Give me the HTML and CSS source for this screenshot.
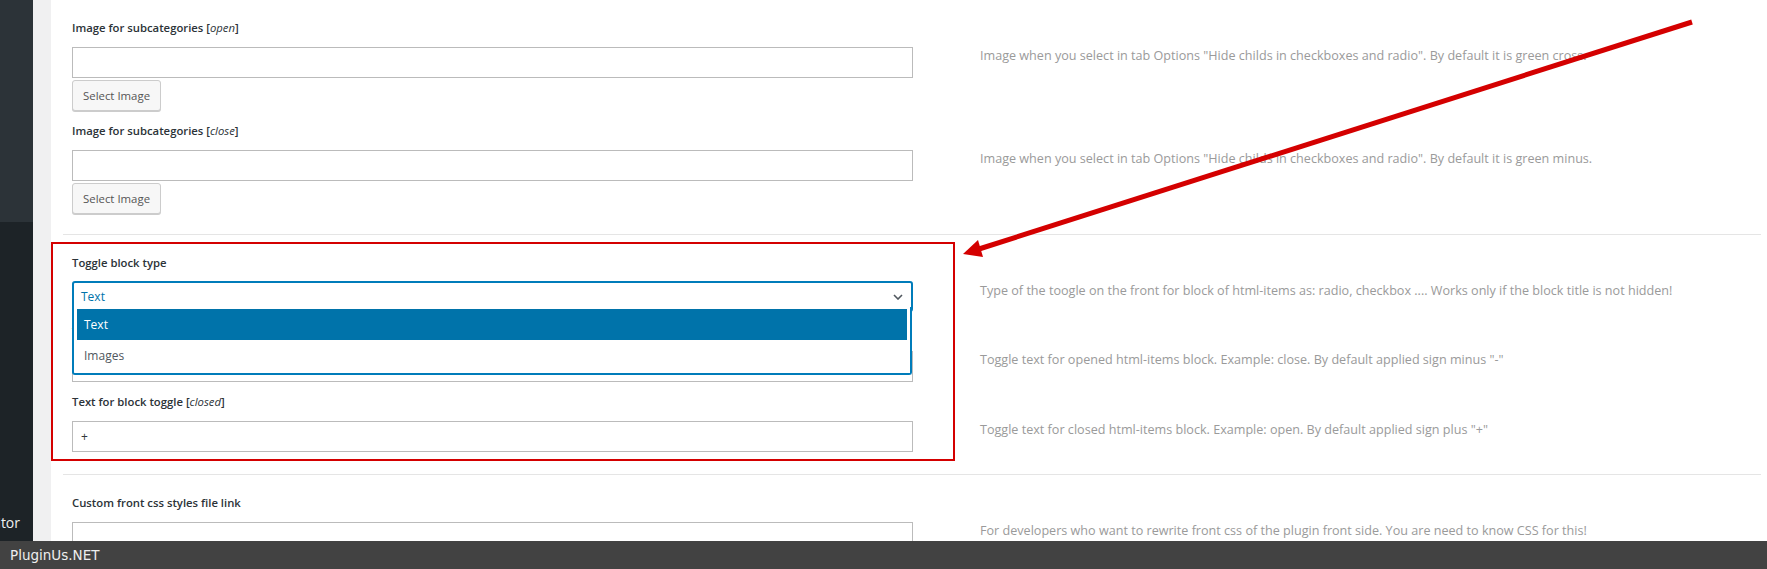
FILE: index.html
```html
<!DOCTYPE html>
<html lang="en">
<head>
    <meta charset="UTF-8">
    <title>Options</title>
    <link rel="stylesheet" href="styles.css">
</head>
<body>
<div id="page">
    <div class="adminmenu">
        <div class="submenu"></div>
        <div class="menu-item">Editor</div>
    </div>
    <div class="wpcontent">
        <div class="main">
            <div class="group">
                <section class="option">
                    <h4>Image for subcategories [<i>open</i>]</h4>
                    <div class="row">
                        <div class="control">
                            <input type="text" class="field">
                            <button class="btn">Select Image</button>
                        </div>
                        <p class="desc">Image when you select in tab Options "Hide childs in checkboxes and radio". By default it is green cross.</p>
                    </div>
                </section>
                <section class="option">
                    <h4>Image for subcategories [<i>close</i>]</h4>
                    <div class="row">
                        <div class="control">
                            <input type="text" class="field">
                            <button class="btn">Select Image</button>
                        </div>
                        <p class="desc">Image when you select in tab Options "Hide childs in checkboxes and radio". By default it is green minus.</p>
                    </div>
                </section>
            </div>
            <div class="group">
                <section class="option">
                    <h4>Toggle block type</h4>
                    <div class="row">
                        <div class="control">
                            <div class="select">
                                <span class="select-value">Text</span>
                                <svg class="chevron" width="10" height="6" viewBox="0 0 10 6"><path d="M1 1l4 4 4-4" fill="none" stroke="#50575e" stroke-width="1.6"/></svg>
                                <ul class="select-menu">
                                    <li class="active">Text</li>
                                    <li>Images</li>
                                </ul>
                            </div>
                        </div>
                        <p class="desc">Type of the toogle on the front for block of html-items as: radio, checkbox .... Works only if the block title is not hidden!</p>
                    </div>
                </section>
                <section class="option">
                    <h4>Text for block toggle [<i>opened</i>]</h4>
                    <div class="row">
                        <div class="control">
                            <input type="text" class="field" value="-">
                        </div>
                        <p class="desc">Toggle text for opened html-items block. Example: close. By default applied sign minus "-"</p>
                    </div>
                </section>
                <section class="option">
                    <h4>Text for block toggle [<i>closed</i>]</h4>
                    <div class="row">
                        <div class="control">
                            <input type="text" class="field" value="+">
                        </div>
                        <p class="desc">Toggle text for closed html-items block. Example: open. By default applied sign plus "+"</p>
                    </div>
                </section>
            </div>
            <div class="group">
                <section class="option">
                    <h4>Custom front css styles file link</h4>
                    <div class="row">
                        <div class="control">
                            <input type="text" class="field">
                        </div>
                        <p class="desc">For developers who want to rewrite front css of the plugin front side. You are need to know CSS for this!</p>
                    </div>
                </section>
            </div>
        </div>
    </div>
</div>

<!-- annotation drawn over the screenshot -->
<svg class="annotation" width="1767" height="569" viewBox="0 0 1767 569">
    <rect x="52" y="243" width="902" height="217" fill="none" stroke="#d40000" stroke-width="2"/>
    <line x1="1692" y1="22" x2="979" y2="249" stroke="#d40000" stroke-width="5"/>
    <polygon points="963,254 983,257 978,240" fill="#d40000"/>
</svg>

<div class="watermark">PluginUs.NET</div>
</body>
</html>
```

FILE: styles.css
```css
*{
    margin: 0;
    padding: 0;
    box-sizing: border-box;
}
html, body{
    height: 100%;
    overflow: hidden;
}
body{
    background-color: #f0f0f1;
    font-family: "Open Sans", "Liberation Sans", sans-serif;
    font-size: 12px;
    color: #23282d;
}
#page{
    display: flex;
    height: 100%;
}
.adminmenu{
    width: 33px;
    flex: none;
    display: flex;
    flex-direction: column;
    background-color: #1d2327;
    overflow: hidden;
}
.adminmenu .submenu{
    height: 222px;
    background-color: #2c3338;
}
.adminmenu .menu-item{
    margin-top: 291px;
    line-height: 20px;
    font-size: 14px;
    color: #f0f0f1;
    white-space: nowrap;
    text-indent: -19px;
}
.wpcontent{
    flex: 1;
    padding-left: 18px;
}
.main{
    height: 100%;
    background-color: #fff;
    padding: 0 6px 0 12px;
}
.group{
    padding: 9px 0;
    border-bottom: 1px solid #e5e5e5;
}
.group + .group{
    padding-bottom: 11px;
}
.option{
    margin: 10px 0 11px;
    padding-left: 9px;
}
.option h4{
    font-size: 11.3px;
    font-weight: 600;
    line-height: 18px;
    margin-bottom: 10px;
    color: #2c3338;
}
.option h4 i{
    font-weight: 400;
}
.row{
    display: flex;
    gap: 67px;
    align-items: flex-start;
}
.control{
    width: 841px;
    flex: none;
}
.field{
    display: block;
    width: 100%;
    height: 31px;
    padding: 0 8px;
    border: 1px solid #bbb;
    background: #fff;
    font-family: inherit;
    font-size: 12px;
    color: #32373c;
    outline: none;
}
.btn{
    display: block;
    margin-top: 2px;
    height: 31px;
    padding: 0 10px;
    border: 1px solid #ccc;
    border-radius: 3px;
    background: #f7f7f7;
    box-shadow: 0 1px 0 #ccc;
    font-family: inherit;
    font-size: 11.4px;
    color: #555;
}
.desc{
    line-height: 16px;
    padding-top: 1px;
    font-size: 12.6px;
    color: #9a9a9a;
    white-space: nowrap;
}
.select{
    position: relative;
    height: 31px;
    margin-top: -1px;
    display: flex;
    align-items: center;
    justify-content: space-between;
    padding: 0 8px 0 7px;
    border: 2px solid #007cba;
    border-radius: 3px;
    background: #fff;
}
.select-value{
    color: #0073aa;
}
.select-menu{
    position: absolute;
    z-index: 2;
    top: 24px;
    left: -2px;
    right: -1px;
    list-style: none;
    padding: 2px 3px 2px;
    border: 2px solid #007cba;
    border-top: none;
    border-radius: 0 0 3px 3px;
    background: #fff;
}
.select-menu li{
    height: 31px;
    line-height: 31px;
    padding-left: 7px;
    color: #50575e;
}
.select-menu li.active{
    background-color: #0073aa;
    color: #fff;
}
.annotation{
    position: absolute;
    top: 0;
    left: 0;
    pointer-events: none;
}
.watermark{
    position: fixed;
    left: 0;
    right: 0;
    bottom: 0;
    height: 28px;
    line-height: 28px;
    padding-left: 10px;
    background-color: #424242;
    font-family: "DejaVu Sans", sans-serif;
    font-size: 13.5px;
    color: #eee;
}
```
